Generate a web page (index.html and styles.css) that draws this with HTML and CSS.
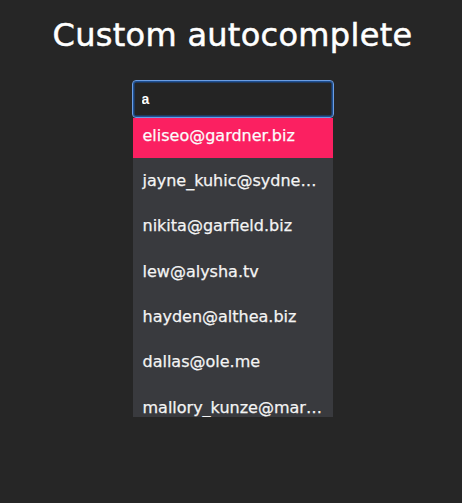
FILE: index.html
```html
<!DOCTYPE html>
<html lang="en">
<head>
<meta charset="utf-8">
<title>Custom autocomplete</title>
<link rel="stylesheet" href="styles.css">
</head>
<body>
<main class="page">
  <h1 class="title">Custom autocomplete</h1>
  <div class="autocomplete">
    <input class="search" type="text" value="a" aria-label="Search email">
    <div class="menu">
      <ul class="options">
        <li class="option is-active">eliseo@gardner.biz</li>
        <li class="option">jayne_kuhic@sydney.com</li>
        <li class="option">nikita@garfield.biz</li>
        <li class="option">lew@alysha.tv</li>
        <li class="option">hayden@althea.biz</li>
        <li class="option">dallas@ole.me</li>
        <li class="option">mallory_kunze@marie.org</li>
      </ul>
    </div>
  </div>
</main>
</body>
</html>
```
FILE: styles.css
```css
html, body {
  margin: 0;
  padding: 0;
  background: #262626;
  height: 100%;
}

body {
  font-family: "DejaVu Sans", "Liberation Sans", sans-serif;
  color: #ffffff;
}

.page {
  display: flex;
  flex-direction: column;
  align-items: center;
  padding-left: 3px;
}

.title {
  margin: 16px 0 0;
  font-size: 32px;
  line-height: 38px;
  font-weight: 400;
  letter-spacing: 0.3px;
  color: #ffffff;
  -webkit-text-stroke: 0.5px #ffffff;
}

.autocomplete {
  margin-top: 26px;
  width: 202px;
  display: flex;
  flex-direction: column;
}

.search {
  box-sizing: border-box;
  width: 202px;
  height: 38px;
  margin: 0;
  padding: 0 9px;
  background: #242424;
  border: 1px solid #6b9de2;
  box-shadow: inset 0 0 0 1.5px #1d4f93;
  border-radius: 4px;
  outline: none;
  color: #ffffff;
  font-family: "Liberation Sans", Arial, sans-serif;
  font-weight: 700;
  font-size: 14px;
}

.menu {
  margin: 0 1px;
  height: 299px;
  overflow: hidden;
  background: #393a3e;
}

.options {
  list-style: none;
  margin: -5.2px 0 0;
  padding: 0;
}

.option {
  height: 45.33px;
  line-height: 45.33px;
  padding: 0 10px;
  font-size: 16px;
  color: #f4f4f4;
  white-space: nowrap;
  overflow: hidden;
  text-overflow: ellipsis;
  -webkit-text-stroke: 0.25px #f4f4f4;
}

.option.is-active {
  background: #fb2061;
  color: #ffffff;
}
```
